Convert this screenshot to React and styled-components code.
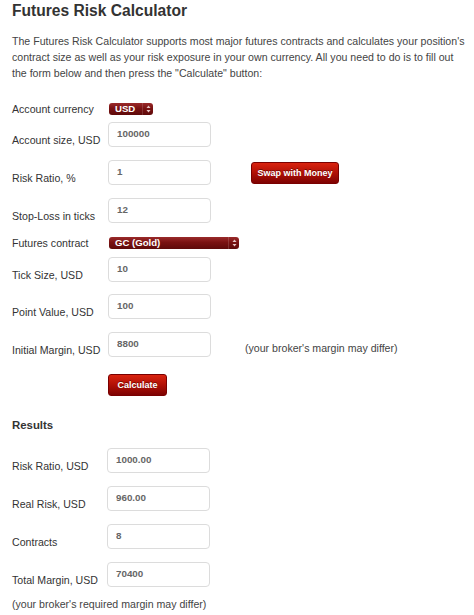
import styled, { createGlobalStyle } from "styled-components";

const GlobalStyle = createGlobalStyle`
  body {
    margin: 0;
    background: #fff;
    font-family: "Liberation Sans", Arial, sans-serif;
    color: #333;
  }
`;

const Page = styled.div`
  padding: 1px 4px 0 12px;
  width: 474px;
  box-sizing: border-box;
`;

const Title = styled.h1`
  margin: 0;
  font-size: 15.6px;
  line-height: 20px;
  font-weight: bold;
  color: #333;
`;

const Intro = styled.p`
  margin: 12px 0 0 0;
  font-size: 10.6px;
  line-height: 16px;
  color: #444;
`;

const Form = styled.div`
  display: flex;
  flex-direction: column;
  margin-top: ${(p) => p.$top}px;
`;

const Row = styled.div`
  display: flex;
  align-items: ${(p) => (p.$select ? "center" : "flex-end")};
  height: ${(p) => (p.$select ? 12 : 25)}px;
  margin-bottom: ${(p) => p.$gap}px;
`;

const Label = styled.label`
  width: 96px;
  flex: none;
  font-size: 10.6px;
  line-height: 16px;
  color: #333;
  margin-bottom: ${(p) => (p.$select ? 0 : -1)}px;
  white-space: nowrap;
`;

const Input = styled.input`
  box-sizing: border-box;
  width: 103px;
  height: 25px;
  margin-left: ${(p) => p.$shift || 0}px;
  border: 1px solid #dcdcdc;
  border-radius: 4px;
  padding: 0 8px 3px;
  font-family: "Liberation Sans", Arial, sans-serif;
  font-size: 9.8px;
  font-weight: bold;
  color: #666;
  background: #fff;
  outline: none;
  align-self: flex-end;
`;

const Select = styled.div`
  box-sizing: border-box;
  display: flex;
  align-items: center;
  width: ${(p) => p.$width}px;
  height: 12px;
  margin-left: 1px;
  border-radius: 3px;
  background: linear-gradient(#9a2a2a 0%, #7a1212 45%, #5e0a0a 100%);
  color: #fff;
  font-size: 9.6px;
  font-weight: bold;
  line-height: 12px;
`;

const SelectText = styled.span`
  flex: 1;
  padding-left: 6px;
`;

const SelectArrow = styled.span`
  width: 10px;
  height: 12px;
  display: flex;
  align-items: center;
  justify-content: center;
  border-left: 1px solid rgba(255, 255, 255, 0.15);
`;

const RedButton = styled.button`
  box-sizing: border-box;
  width: ${(p) => p.$width}px;
  height: 22px;
  padding: 0;
  border: 1px solid #7a0000;
  border-radius: 3px;
  background: linear-gradient(#d9230f 0%, #b01006 50%, #7e0202 100%);
  color: #fff;
  font-family: "Liberation Sans", Arial, sans-serif;
  font-size: 9px;
  font-weight: bold;
  text-shadow: 0 -1px 0 rgba(0, 0, 0, 0.4);
  cursor: pointer;
`;

const SideButton = styled(RedButton)`
  margin-left: 40px;
  align-self: center;
`;

const CalcButton = styled(RedButton)`
  margin-left: 96px;
`;

const Note = styled.span`
  margin-left: 34px;
  font-size: 10.6px;
  line-height: 16px;
  color: #444;
  align-self: center;
  padding-top: 6px;
`;

const ResultsHeading = styled.h3`
  margin: 21px 0 0 0;
  font-size: 11.4px;
  line-height: 16px;
  font-weight: bold;
  color: #333;
`;

const Footnote = styled.div`
  margin-top: 9px;
  font-size: 10.6px;
  line-height: 16px;
  color: #444;
`;

function Arrows() {
  return (
    <svg width="5" height="8" viewBox="0 0 5 8">
      <path d="M2.5 0.5 L4.5 3 L0.5 3 Z" fill="#e8c8c8" />
      <path d="M2.5 7.5 L4.5 5 L0.5 5 Z" fill="#e8c8c8" />
    </svg>
  );
}

const results = [
  ["Risk Ratio, USD", "1000.00"],
  ["Real Risk, USD", "960.00"],
  ["Contracts", "8"],
  ["Total Margin, USD", "70400"],
];

export default function App() {
  return (
    <Page>
      <GlobalStyle />
      <Title>Futures Risk Calculator</Title>
      <Intro>
        The Futures Risk Calculator supports most major futures contracts and
        calculates your position's contract size as well as your risk exposure
        in your own currency. All you need to do is to fill out the form below
        and then press the "Calculate" button:
      </Intro>

      <Form $top={22}>
        <Row $select $gap={7}>
          <Label $select>Account currency</Label>
          <Select $width={44}>
            <SelectText>USD</SelectText>
            <SelectArrow>
              <Arrows />
            </SelectArrow>
          </Select>
        </Row>
        <Row $gap={13}>
          <Label>Account size, USD</Label>
          <Input defaultValue="100000" />
        </Row>
        <Row $gap={13}>
          <Label>Risk Ratio, %</Label>
          <Input defaultValue="1" />
          <SideButton $width={88}>Swap with Money</SideButton>
        </Row>
        <Row $gap={14}>
          <Label>Stop-Loss in ticks</Label>
          <Input defaultValue="12" />
        </Row>
        <Row $select $gap={8}>
          <Label $select>Futures contract</Label>
          <Select $width={130}>
            <SelectText>GC (Gold)</SelectText>
            <SelectArrow>
              <Arrows />
            </SelectArrow>
          </Select>
        </Row>
        <Row $gap={12}>
          <Label>Tick Size, USD</Label>
          <Input defaultValue="10" />
        </Row>
        <Row $gap={13}>
          <Label>Point Value, USD</Label>
          <Input defaultValue="100" />
        </Row>
        <Row $gap={17}>
          <Label>Initial Margin, USD</Label>
          <Input defaultValue="8800" />
          <Note>(your broker's margin may differ)</Note>
        </Row>
        <div>
          <CalcButton $width={59}>Calculate</CalcButton>
        </div>
      </Form>

      <ResultsHeading>Results</ResultsHeading>
      <Form $top={15}>
        {results.map(([label, value], i) => (
          <Row key={label} $gap={i === results.length - 1 ? 0 : 13}>
            <Label>{label}</Label>
            <Input $shift={-1} defaultValue={value} readOnly />
          </Row>
        ))}
      </Form>
      <Footnote>(your broker's required margin may differ)</Footnote>
    </Page>
  );
}
